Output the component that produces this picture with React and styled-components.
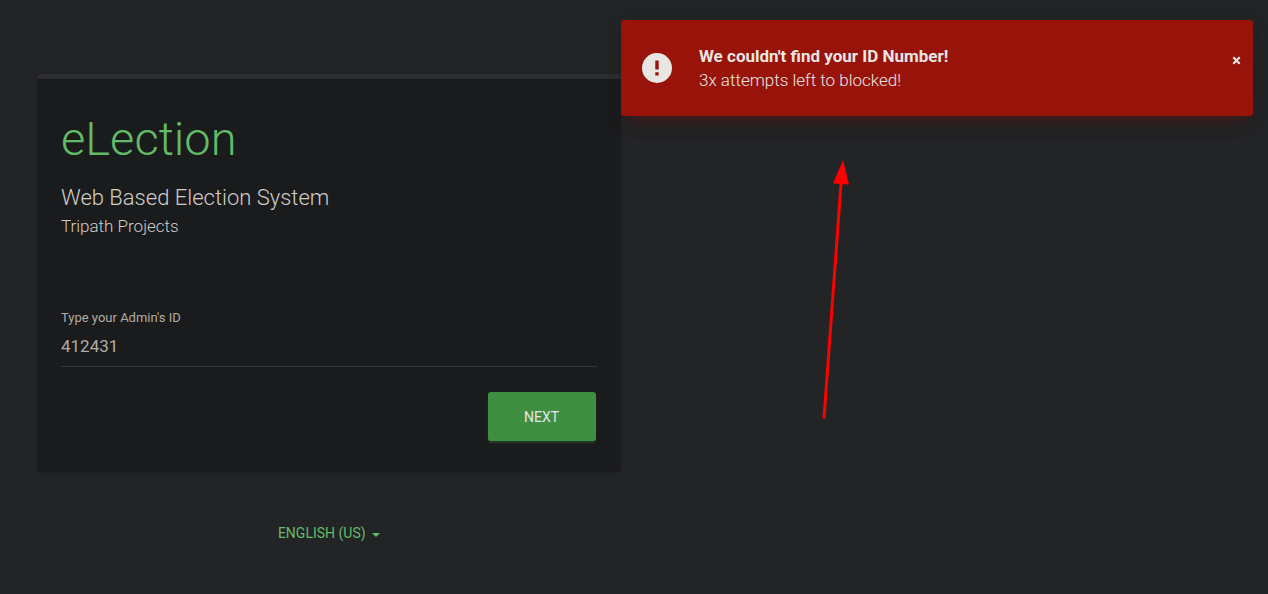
import React, { useState } from "react";
import styled, { createGlobalStyle } from "styled-components";

const GlobalStyle = createGlobalStyle`
  *, *::before, *::after { box-sizing: border-box; }
  body {
    margin: 0;
    background: #232426;
    color: #d1cdc7;
    font-family: Roboto, "Liberation Sans", sans-serif;
    font-size: 17px;
    font-weight: 300;
    line-height: 24px;
  }
  button, input, select { font-family: inherit; }
`;

const Page = styled.main`
  position: relative;
  min-height: 100vh;
  padding: 74px 0 48px 37px;
`;

const Column = styled.div`
  width: calc(50% - 32px);
`;

const Card = styled.form`
  border-top: 5px solid #2c2e30;
  border-radius: 4px;
  padding: 32px 24px 31px;
  background: #1a1b1d;
  box-shadow: 0 1px 4px rgba(0, 0, 0, 0.14);
`;

const Brand = styled.h1`
  margin: 0;
  color: #62bb66;
  font-size: 47px;
  font-weight: 300;
  line-height: 56px;
`;

const Tagline = styled.h2`
  margin: 16px 0 0;
  font-size: 22px;
  font-weight: 300;
  line-height: 30px;
`;

const Organisation = styled.p`
  margin: 0;
  line-height: 26px;
`;

const Field = styled.div`
  display: flex;
  flex-direction: column;
  margin-top: 69px;
`;

const FieldLabel = styled.label`
  font-size: 13px;
  font-weight: 400;
  line-height: 20px;
  color: #b2aca2;
`;

const TextInput = styled.input`
  width: 100%;
  height: 39px;
  padding: 0 0 2px;
  border: 0;
  border-bottom: 1px solid #363739;
  border-radius: 0;
  outline: 0;
  background: transparent;
  color: #b2aca2;
  font-size: 17px;
  font-weight: 400;
`;

const Actions = styled.div`
  display: flex;
  justify-content: flex-end;
  margin-top: 25px;
  padding-right: 1px;
`;

const PrimaryButton = styled.button`
  min-width: 108px;
  height: 49px;
  padding: 0 32px;
  border: 0;
  border-radius: 3px;
  background: #3f8e42;
  color: #e8e6e3;
  font-size: 14px;
  font-weight: 400;
  text-transform: uppercase;
  box-shadow: 0 2px 2px rgba(63, 142, 66, 0.3);
  cursor: pointer;
`;

const LanguagePicker = styled.label`
  display: flex;
  align-items: center;
  justify-content: center;
  gap: 6px;
  margin-top: 49px;
  color: #62bb66;
`;

const LanguageSelect = styled.select`
  appearance: none;
  field-sizing: content;
  padding: 0;
  border: 0;
  outline: 0;
  background: transparent;
  color: inherit;
  font-size: 14px;
  font-weight: 400;
  line-height: 24px;
  text-transform: uppercase;
  cursor: pointer;
`;

const Caret = styled.svg`
  width: 8px;
  height: 4px;
  margin-top: 4px;
  fill: currentColor;
`;

const Toast = styled.div`
  position: absolute;
  top: 20px;
  right: 15px;
  width: calc(50% - 2px);
  display: flex;
  align-items: center;
  padding: 24px 12px 24px 21px;
  border-radius: 3px;
  background: #981309;
  color: #e8e6e3;
  box-shadow: 0 12px 20px -10px rgba(152, 19, 9, 0.28),
    0 4px 20px rgba(0, 0, 0, 0.12), 0 7px 8px -5px rgba(152, 19, 9, 0.2);
`;

const AlertIcon = styled.svg`
  flex: none;
  width: 30px;
  height: 30px;
  margin-right: 27px;
`;

const ToastText = styled.p`
  flex: 1;
  margin: 0;
`;

const ToastTitle = styled.strong`
  display: block;
  font-weight: 700;
`;

const CloseButton = styled.button`
  align-self: flex-start;
  display: flex;
  padding: 12px 0 12px 12px;
  border: 0;
  background: transparent;
  color: #e8e6e3;
  cursor: pointer;
`;

const Arrow = styled.svg`
  position: absolute;
  top: 160px;
  right: 418px;
  width: 30px;
  height: 260px;
`;

export default function App() {
  const [adminId, setAdminId] = useState("412431");
  const [toastOpen, setToastOpen] = useState(true);

  return (
    <>
      <GlobalStyle />
      <Page>
        <Column>
          <Card onSubmit={(event) => event.preventDefault()}>
            <Brand>eLection</Brand>
            <Tagline>Web Based Election System</Tagline>
            <Organisation>Tripath Projects</Organisation>
            <Field>
              <FieldLabel htmlFor="admin-id">Type your Admin's ID</FieldLabel>
              <TextInput
                id="admin-id"
                type="text"
                value={adminId}
                onChange={(event) => setAdminId(event.target.value)}
              />
            </Field>
            <Actions>
              <PrimaryButton type="submit">Next</PrimaryButton>
            </Actions>
          </Card>
          <LanguagePicker>
            <LanguageSelect aria-label="Language" defaultValue="en-us">
              <option value="en-us">English (US)</option>
            </LanguageSelect>
            <Caret viewBox="0 0 8 4" aria-hidden="true">
              <path d="M0 0h8L4 4z" />
            </Caret>
          </LanguagePicker>
        </Column>
        {toastOpen && (
          <Toast role="alert">
            <AlertIcon viewBox="0 0 30 30" aria-hidden="true">
              <circle cx="15" cy="15" r="15" fill="#e8e6e3" />
              <path d="M13.300 7.500h3.400v9h-3.400zM13.300 19.300h3.400v3.300h-3.400z" fill="#981309" />
            </AlertIcon>
            <ToastText>
              <ToastTitle>We couldn't find your ID Number!</ToastTitle>
              3x attempts left to blocked!
            </ToastText>
            <CloseButton
              type="button"
              aria-label="Close"
              onClick={() => setToastOpen(false)}
            >
              <svg width="9" height="9" viewBox="0 0 9 9" aria-hidden="true">
                <path
                  d="M1.300 1.300l6.400 6.400M7.700 1.300l-6.400 6.400"
                  stroke="currentColor"
                  strokeWidth="2.200"
                />
              </svg>
            </CloseButton>
          </Toast>
        )}
        <Arrow viewBox="0 0 30 260" aria-hidden="true">
          <path d="M21.300 20L4 258.500" stroke="#ff0000" strokeWidth="3" />
          <path d="M23 0l6 24.500L13 23.500z" fill="#ff0000" />
        </Arrow>
      </Page>
    </>
  );
}
